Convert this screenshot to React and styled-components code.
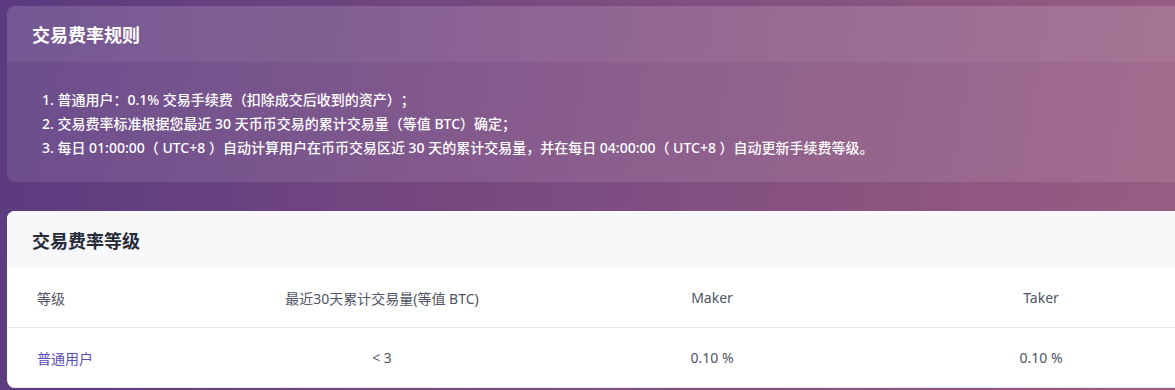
import React from "react";
import styled, { createGlobalStyle } from "styled-components";

const GlobalStyle = createGlobalStyle`
	html, body {
		margin: 0;
		padding: 0;
		height: 100%;
		overflow: hidden;
	}
	body {
		font-family: "Noto Sans", "Noto Sans CJK SC", sans-serif;
		background: #5c3b80;
	}
`;

const rules = [
	"普通用户：0.1% 交易手续费（扣除成交后收到的资产）；",
	"交易费率标准根据您最近 30 天币币交易的累计交易量（等值 BTC）确定；",
	"每日 01:00:00（ UTC+8 ）自动计算用户在币币交易区近 30 天的累计交易量，并在每日 04:00:00（ UTC+8 ）自动更新手续费等级。",
];

const levels = [{ name: "普通用户", volume: "< 3", maker: "0.10 %", taker: "0.10 %" }];

const App = () => {
	return (
		<>
			<GlobalStyle />
			<Page>
				<RuleCard>
					<RuleHeader>交易费率规则</RuleHeader>
					<RuleList>
						{rules.map((text, i) => (
							<li key={i}>
								{i + 1}. {text}
							</li>
						))}
					</RuleList>
				</RuleCard>

				<LevelCard>
					<LevelHeader>交易费率等级</LevelHeader>
					<Row>
						<Cell>等级</Cell>
						<Cell center>最近30天累计交易量(等值 BTC)</Cell>
						<Cell center>Maker</Cell>
						<Cell center>Taker</Cell>
					</Row>
					{levels.map((l) => (
						<Row key={l.name}>
							<Cell accent>{l.name}</Cell>
							<Cell center>{l.volume}</Cell>
							<Cell center>{l.maker}</Cell>
							<Cell center>{l.taker}</Cell>
						</Row>
					))}
				</LevelCard>
			</Page>
		</>
	);
};

const Page = styled.div`
	width: 1175px;
	height: 390px;
	box-sizing: border-box;
	padding: 6px 0 0 7px;
	overflow: hidden;
	background: linear-gradient(100deg, #5a3a80 0%, #7a4a80 45%, #9a5e82 100%);
	display: flex;
	flex-direction: column;
	gap: 29px;
`;

const RuleCard = styled.section`
	width: 1230px;
	flex-shrink: 0;
	border-radius: 8px;
	background: rgba(255, 255, 255, 0.1);
	color: #fff;
	overflow: hidden;
`;

const RuleHeader = styled.h2`
	margin: 0;
	height: 56px;
	display: flex;
	align-items: center;
	padding-left: 25px;
	font-size: 18px;
	font-weight: 700;
	background: rgba(255, 255, 255, 0.06);
`;

const RuleList = styled.ul`
	list-style: none;
	margin: 0;
	padding: 26px 0 22px 35px;
	font-size: 14px;
	line-height: 24px;
	font-weight: 500;
	text-spacing-trim: space-all;
`;

const LevelCard = styled.section`
	width: 1230px;
	flex-shrink: 0;
	border-radius: 8px;
	background: #fff;
	overflow: hidden;
`;

const LevelHeader = styled.h2`
	margin: 0;
	height: 57px;
	display: flex;
	align-items: center;
	padding-left: 25px;
	font-size: 18px;
	font-weight: 700;
	color: #262b3a;
	background: #f8f8fb;
`;

const Row = styled.div`
	display: grid;
	grid-template-columns: 200px 350px 310px 348px 1fr;
	height: 59px;
	align-items: center;
	border-bottom: 1px solid #e8e8ec;
`;

const Cell = styled.div`
	font-size: 14px;
	color: ${(p) => (p.accent ? "#5a4db8" : "#4f5465")};
	text-align: ${(p) => (p.center ? "center" : "left")};
	padding-left: ${(p) => (p.center ? "0" : "30px")};
`;

export default App;
